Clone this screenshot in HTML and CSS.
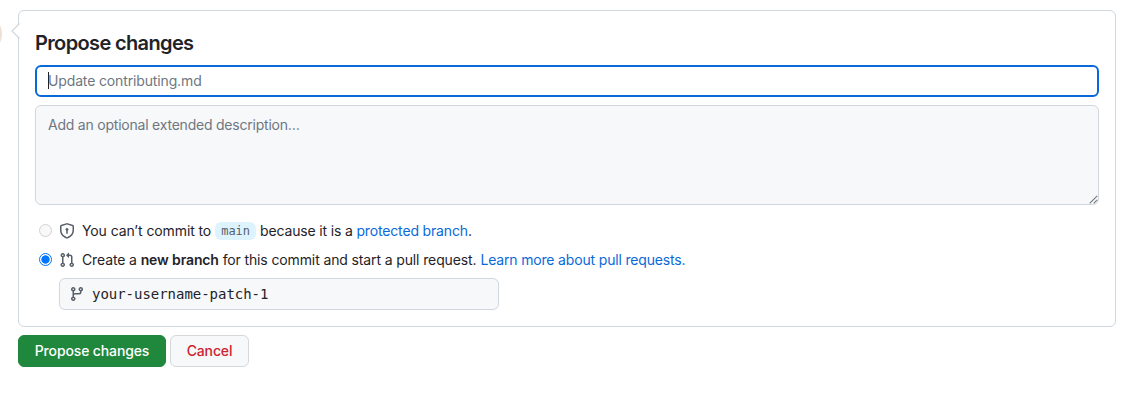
FILE: index.html
```html
<!DOCTYPE html>
<html lang="en">
<head>
<meta charset="utf-8">
<title>Propose changes</title>
<link rel="stylesheet" href="styles.css">
</head>
<body>
<main class="page">
  <span class="avatar"></span>
  <section class="box">
    <svg class="pointer" width="9" height="18" viewBox="0 0 9 18"><path d="M8.5 1.5 1 9l7.5 7.5" fill="#fff" stroke="#d0d7de" stroke-width="1.2"/></svg>
    <h3 class="title">Propose changes</h3>
    <div class="field summary"><span class="caret"></span><span class="summary-text">Update contributing.md</span></div>
    <div class="field description"><span class="description-text">Add an optional extended description…</span>
      <svg class="grip" width="9" height="9" viewBox="0 0 9 9"><path d="M.7 8.3 8.2.8M4.7 8.3l3.5-3.5" fill="none" stroke="#73777c" stroke-width="1.1"/></svg>
    </div>
    <div class="choice">
      <span class="radio disabled"></span>
      <svg class="icon" width="16" height="16" viewBox="0 0 16 16"><path d="m8.533.133 5.25 1.68A1.75 1.75 0 0 1 15 3.48V7c0 1.566-.32 3.182-1.303 4.682-.983 1.498-2.585 2.813-5.032 3.855a1.697 1.697 0 0 1-1.33 0c-2.447-1.042-4.049-2.357-5.032-3.855C1.32 10.182 1 8.566 1 7V3.48a1.755 1.755 0 0 1 1.217-1.667l5.25-1.68a1.748 1.748 0 0 1 1.066 0Zm-.61 1.429.001.001-5.25 1.68a.251.251 0 0 0-.174.237V7c0 1.36.275 2.666 1.057 3.859.784 1.194 2.121 2.342 4.366 3.298a.196.196 0 0 0 .154 0c2.245-.957 3.582-2.103 4.366-3.297C13.225 9.666 13.5 8.358 13.5 7V3.48a.25.25 0 0 0-.174-.238l-5.25-1.68a.25.25 0 0 0-.153 0ZM9.5 6.5c0 .536-.286 1.032-.75 1.3v2.45a.75.75 0 0 1-1.5 0V7.8A1.5 1.5 0 1 1 9.5 6.5Z"/></svg>
      <p class="copy"><span class="c1">You can’t commit to</span><code class="branch">main</code><span class="c2">because it is a <a class="link">protected branch</a>.</span></p>
    </div>
    <div class="choice second">
      <span class="radio checked"></span>
      <svg class="icon" width="16" height="16" viewBox="0 0 16 16"><path d="M1.5 3.25a2.25 2.25 0 1 1 3 2.122v5.256a2.251 2.251 0 1 1-1.5 0V5.372A2.25 2.25 0 0 1 1.5 3.25Zm5.677-.177L9.573.677A.25.25 0 0 1 10 .854V2.5h1A2.5 2.5 0 0 1 13.5 5v5.628a2.251 2.251 0 1 1-1.5 0V5a1 1 0 0 0-1-1h-1v1.646a.25.25 0 0 1-.427.177L7.177 3.427a.25.25 0 0 1 0-.354ZM3.75 2.5a.75.75 0 1 0 0 1.5.75.75 0 0 0 0-1.5Zm0 9.5a.75.75 0 1 0 0 1.5.75.75 0 0 0 0-1.5Zm8.25.75a.75.75 0 1 0 1.5 0 .75.75 0 0 0-1.5 0Z"/></svg>
      <p class="copy"><span class="c3">Create a <b>new branch</b> for this commit and start a pull request.</span><a class="link c4">Learn more about pull requests.</a></p>
    </div>
    <div class="field branch-name">
      <svg class="icon small" width="16" height="16" viewBox="0 0 16 16"><path d="M9.5 3.25a2.25 2.25 0 1 1 3 2.122V6A2.5 2.5 0 0 1 10 8.5H6a1 1 0 0 0-1 1v1.128a2.251 2.251 0 1 1-1.5 0V5.372a2.25 2.25 0 1 1 1.5 0v1.836A2.493 2.493 0 0 1 6 7h4a1 1 0 0 0 1-1v-.628A2.25 2.25 0 0 1 9.5 3.25Zm-6 0a.75.75 0 1 0 1.5 0 .75.75 0 0 0-1.5 0Zm8.25-.75a.75.75 0 1 0 0 1.5.75.75 0 0 0 0-1.5ZM4.25 12a.75.75 0 1 0 0 1.5.75.75 0 0 0 0-1.5Z"/></svg>
      <span class="branch-text">your-username-patch-1</span>
    </div>
  </section>
  <div class="actions">
    <button class="btn primary">Propose changes</button>
    <button class="btn danger">Cancel</button>
  </div>
</main>
</body>
</html>
```
FILE: styles.css
```css
* { box-sizing: border-box; }
body {
  margin: 0;
  background: #fff;
  color: #1f2328;
  font: 14px/21px Inter, "Liberation Sans", sans-serif;
  overflow: hidden;
}
.page { position: relative; width: 1132px; height: 401px; padding: 10px 16px 0 18px; overflow: hidden; }
.avatar { position: absolute; left: -38.5px; top: 14px; width: 40px; height: 40px; border-radius: 50%; background: #eee0d5; }
.box {
  position: relative;
  height: 317px;
  padding: 20px 16px 0;
  border: 1px solid #d0d7de;
  border-radius: 6px;
}
.pointer { position: absolute; left: -8px; top: 11px; }
.title { margin: 0; height: 34px; font-size: 20px; line-height: 24px; font-weight: 600; letter-spacing: -.64px; }
.field { border: 1px solid #d0d7de; border-radius: 6px; background: #f6f8fa; color: #6e7781; }
.summary { display: flex; align-items: center; height: 32px; padding: 0 0 1px 11px; border: 2px solid #0969da; background: #fff; }
.summary-text { letter-spacing: -.14px; }
.caret { width: 1px; height: 17px; margin-right: -1px; background: #1f2328; }
.description { position: relative; height: 100px; margin-top: 8px; padding: 8px 12px; }
.description-text { letter-spacing: -.22px; }
.grip { position: absolute; right: 0; bottom: 0; }
.choice { display: flex; align-items: center; height: 21px; margin: 15px 0 0 4px; }
.choice.second { margin-top: 8px; }
.radio { width: 13px; height: 13px; margin-right: 7px; border: 1px solid #d2d2d2; border-radius: 50%; background: #f8f8f8; }
.radio.checked { border-color: #0075ff; background: radial-gradient(circle, #0075ff 3.8px, #fff 4.5px); }
.icon { display: block; fill: #57606a; }
.copy { display: flex; align-items: center; margin: 0 0 0 7px; white-space: nowrap; }
.c1 { letter-spacing: -.1px; }
.c2 { letter-spacing: -.16px; }
.c3 { letter-spacing: -.125px; }
.branch {
  margin: 0 4px;
  padding: 0 6px;
  border-radius: 6px;
  background: #ddf4ff;
  color: #57606a;
  font: 12px/18px "DejaVu Sans Mono", monospace;
}
.link { color: #0969da; }
b { font-weight: 600; }
.c4 { margin-left: 4px; letter-spacing: -.17px; }
.branch-name {
  display: flex;
  align-items: center;
  width: 440px;
  height: 32px;
  margin: 8px 0 0 24px;
  padding-left: 9px;
  color: #1f2328;
  font: 14px/20px "DejaVu Sans Mono", monospace;
}
.branch-text { padding-bottom: 1px; letter-spacing: -.03px; }
.small { margin-right: 7px; }
.actions { display: flex; gap: 4px; margin-top: 8px; }
.btn { height: 32px; padding: 0; border: 1px solid #d5d8da; border-radius: 6px; font: 500 14px/20px Inter, sans-serif; letter-spacing: -.13px; }
.primary { width: 148px; border-color: #1f883d; background: #1f883d; color: #fff; }
.danger { width: 79px; background: #f6f8fa; color: #cf222e; }
```
